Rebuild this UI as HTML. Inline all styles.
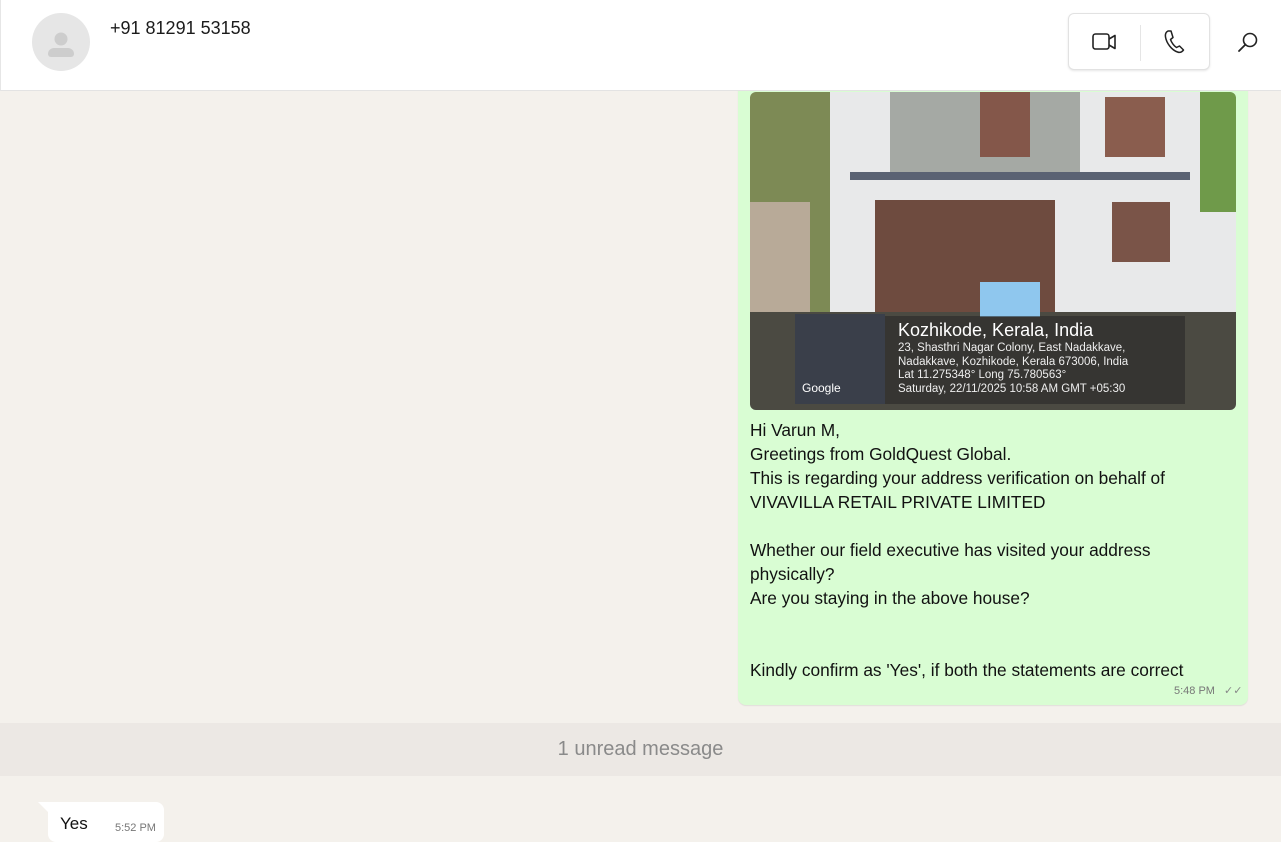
<!DOCTYPE html>
<html><head><style>
*{margin:0;padding:0;box-sizing:border-box}
body{width:1281px;height:837px;overflow:hidden;background:#f4f1ec;font-family:"Liberation Sans",sans-serif;position:relative}
.hdr{position:absolute;left:0;top:0;width:1281px;height:91px;background:#fff;border-bottom:1px solid #e3e3e3;border-left:1px solid #e6e6e6;z-index:5}
.av{position:absolute;left:31px;top:13px;width:58px;height:58px;border-radius:50%;background:#e6e6e6}
.name{position:absolute;left:109px;top:18px;font-size:18px;color:#1b1b1b}
.btns{position:absolute;left:1067px;top:13px;width:142px;height:57px;border:1px solid #e2e2e2;border-radius:6px;box-shadow:0 1px 2px rgba(0,0,0,.1);background:#fff}
.sep{position:absolute;left:71px;top:11px;width:1px;height:36px;background:#e5e5e5}
.bubble{position:absolute;left:738px;top:80px;width:510px;height:625px;background:#d9fdd3;border-radius:8px;box-shadow:0 1px 1px rgba(0,0,0,.08)}
.photo{position:absolute;left:750px;top:92px;width:486px;height:318px;border-radius:6px;overflow:hidden;background:#e9ecef}
.photo div{position:absolute}
.txt{position:absolute;left:750px;top:418px;font-size:17.3px;line-height:24px;color:#111}
.band{position:absolute;left:0;top:723px;width:1281px;height:53px;background:rgba(180,175,170,.12);text-align:center;font-size:20px;line-height:53px;color:#8a8a8a}
.yes{position:absolute;left:48px;top:802px;width:116px;height:40px;background:#fff;border-radius:0 8px 8px 8px}
.tail{position:absolute;left:38px;top:802px;width:0;height:0;border-top:10px solid #fff;border-left:10px solid transparent}
</style></head><body>
<div class="hdr">
 <div class="av"><svg width="58" height="58"><circle cx="29" cy="26" r="6.5" fill="#cdcdcd"/><path d="M16 41a6 6 0 0 1 6-6h14a6 6 0 0 1 6 6v0a3 3 0 0 1-3 3H19a3 3 0 0 1-3-3z" fill="#cdcdcd"/></svg></div>
 <div class="name">+91 81291 53158</div>
 <div class="btns">
  <svg style="position:absolute;left:23px;top:17px" width="26" height="22" viewBox="0 0 26 22"><rect x="1" y="3" width="16" height="15" rx="2.5" fill="none" stroke="#222" stroke-width="1.6"/><path d="M17 8l6-3.5v13L17 14" fill="none" stroke="#222" stroke-width="1.6" stroke-linejoin="round"/></svg>
  <div class="sep"></div>
  <svg style="position:absolute;left:94px;top:15px" width="24" height="26" viewBox="0 0 24 26"><path d="M5 2c-2 1-3 3-2.5 6 1 6 6 13 12 15 2.5 1 4.5 0 6-2l-4-4-3 1.5c-2.5-1.5-5-5-6-8l2.5-2L8 2z" fill="none" stroke="#222" stroke-width="1.5" stroke-linejoin="round"/></svg>
 </div>
 <svg style="position:absolute;left:1236px;top:31px" width="22" height="22" viewBox="0 0 22 22"><circle cx="13" cy="9" r="6.5" fill="none" stroke="#222" stroke-width="1.6"/><path d="M8.5 13.5L2 20" stroke="#222" stroke-width="1.8" stroke-linecap="round"/></svg>
</div>
<div class="bubble"></div>
<div class="photo">
 <div style="left:0;top:0;width:80px;height:230px;background:#7d8a55"></div>
 <div style="left:0;top:110px;width:60px;height:130px;background:#b8aa98"></div>
 <div style="left:80px;top:0;width:406px;height:230px;background:#e8e9ea"></div>
 <div style="left:140px;top:0;width:190px;height:85px;background:#a5a9a4"></div>
 <div style="left:100px;top:80px;width:340px;height:8px;background:#5a6273"></div>
 <div style="left:230px;top:0;width:50px;height:65px;background:#84574a"></div>
 <div style="left:355px;top:5px;width:60px;height:60px;background:#8a5d4e"></div>
 <div style="left:450px;top:0;width:36px;height:120px;background:#6f9a4a"></div>
 <div style="left:125px;top:108px;width:180px;height:150px;background:#6e4b3f"></div>
 <div style="left:362px;top:110px;width:58px;height:60px;background:#7a5448"></div>
 <div style="left:0;top:220px;width:486px;height:98px;background:#4b4a42"></div>
 <div style="left:230px;top:190px;width:60px;height:35px;background:#8fc7ee"></div>
 <div style="left:45px;top:222px;width:90px;height:90px;background:#3a3f4a"></div>
 <div style="left:135px;top:224px;width:300px;height:88px;background:rgba(40,40,40,.6)"></div>
 <div style="left:148px;top:228px;color:#fff;font-size:18px">Kozhikode, Kerala, India</div>
 <div style="left:148px;top:250px;color:#eee;font-size:11.5px;line-height:13.5px">23, Shasthri Nagar Colony, East Nadakkave,<br>Nadakkave, Kozhikode, Kerala 673006, India<br>Lat 11.275348° Long 75.780563°<br>Saturday, 22/11/2025 10:58 AM GMT +05:30</div>
 <div style="left:52px;top:289px;color:#fff;font-size:12px">Google</div>
</div>
<div class="txt">Hi Varun M,<br>Greetings from GoldQuest Global.<br>This is regarding your address verification on behalf of<br>VIVAVILLA RETAIL PRIVATE LIMITED<br><br>Whether our field executive has visited your address<br>physically?<br>Are you staying in the above house?<br><br><br>Kindly confirm as 'Yes', if both the statements are correct</div>
<div style="position:absolute;left:1174px;top:685px;font-size:11px;color:#777">5:48 PM</div>
<div style="position:absolute;left:1224px;top:684px;font-size:11px;color:#888">✓✓</div>
<div class="band">1 unread message</div>
<div class="tail"></div>
<div class="yes"><span style="position:absolute;left:12px;top:12px;font-size:17px;color:#111">Yes</span><span style="position:absolute;left:67px;top:20px;font-size:11px;color:#777">5:52 PM</span></div>
</body></html>
